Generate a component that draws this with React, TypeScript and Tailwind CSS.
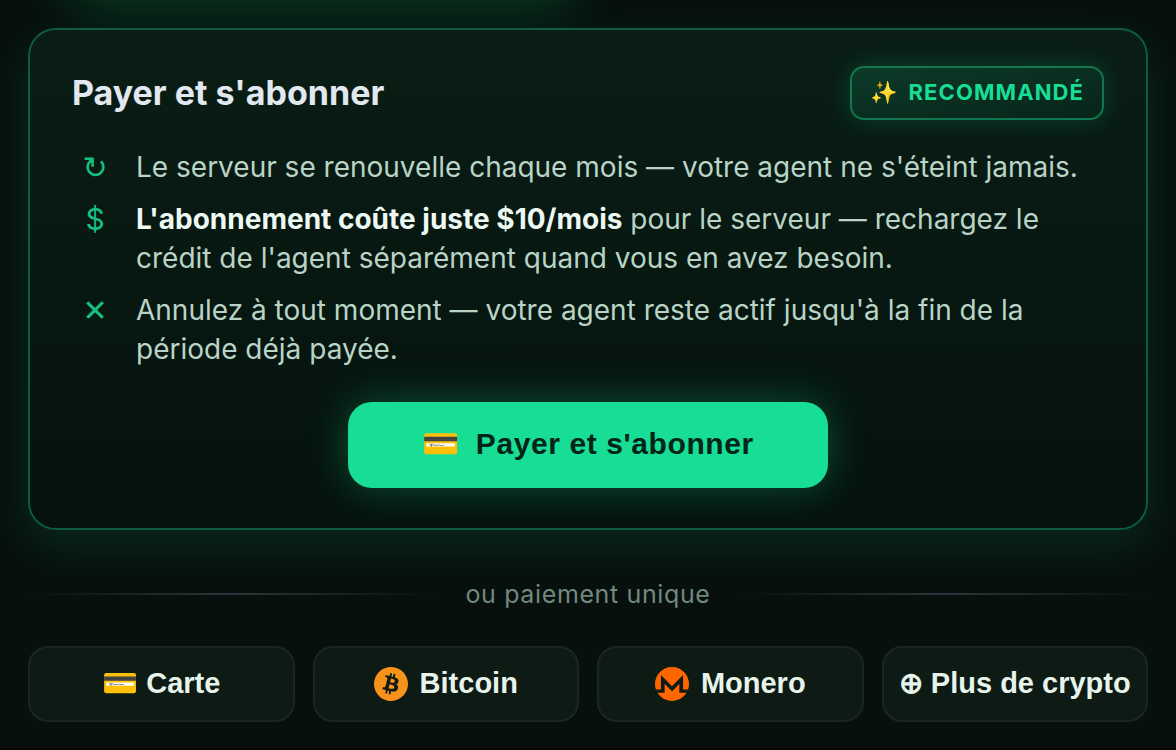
import React from 'react';
import { SiBitcoin, SiMonero } from 'react-icons/si';

const perks = [
  {
    icon: '↻',
    iconFont: "font-['DejaVu_Sans',sans-serif]",
    text: <>Le serveur se renouvelle chaque mois — votre agent ne s'éteint jamais.</>,
  },
  {
    icon: '$',
    iconFont: 'font-[Inter,sans-serif]',
    text: (
      <>
        <strong className="font-bold text-[#ecf8f1]">L'abonnement coûte juste $10/mois</strong> pour le serveur —
        rechargez le crédit de l'agent séparément quand vous en avez besoin.
      </>
    ),
  },
  {
    icon: '✕',
    iconFont: "font-['DejaVu_Sans',sans-serif]",
    text: <>Annulez à tout moment — votre agent reste actif jusqu'à la fin de la période déjà payée.</>,
  },
];

const methodClass =
  "flex h-[76px] cursor-pointer items-center justify-center whitespace-nowrap rounded-[20px] border-2 border-[#1a2620] bg-[#0e1a14] font-['Liberation_Sans',sans-serif] text-[29px] font-bold text-[#e6f4ec]";

const App = () => {
  return (
    <div className="relative min-h-screen overflow-hidden border-b-2 border-[#020504] bg-[#07100d] px-7 pt-7 pb-6 font-[Inter,sans-serif]">
      {/* glow of the plan selected above */}
      <div
        aria-hidden="true"
        className="absolute -top-20 left-[68px] h-16 w-[508px] rounded-[28px] shadow-[0_16px_56px_rgba(24,222,130,0.28)]"
      />

      <section className="relative rounded-[28px] border-2 border-[#0e5c40] bg-linear-to-b from-[#0a1f16]/90 to-[#05120d] px-[42px] pt-9 pb-10 shadow-[0_16px_48px_rgba(24,222,148,0.12)]">
        <div className="flex h-[54px] items-center justify-between">
          <h2 className="pb-0.5 text-[34px] font-bold text-slate-200">Payer et s'abonner</h2>
          <span className="flex h-[54px] items-center gap-[10px] rounded-[14px] border-2 border-[#11774f] bg-linear-to-br from-[#0c3a29] to-[#08241a] px-[18px] pb-0.5 text-[22px] font-bold tracking-wider text-[#18dd94] shadow-[0_0_24px_rgba(24,222,148,0.2)]">
            <span>✨</span>
            <span>RECOMMANDÉ</span>
          </span>
        </div>

        <ul className="mt-7 flex flex-col gap-[13px]">
          {perks.map((perk) => (
            <li key={perk.icon} className="flex items-start gap-[18px] text-[28px] leading-[39px] text-[#b9d4c6]">
              <span className={`w-[46px] shrink-0 text-center text-[30px] text-[#17bf80] ${perk.iconFont}`}>
                {perk.icon}
              </span>
              <span>{perk.text}</span>
            </li>
          ))}
        </ul>

        <button
          type="button"
          className="mx-auto mt-[33px] flex h-[86px] w-[480px] cursor-pointer items-center justify-center gap-4 rounded-[24px] bg-[#18dd94] pb-1 font-['Liberation_Sans',sans-serif] text-[30px] font-bold tracking-[0.02em] text-[#04241a] shadow-[0_0_40px_rgba(24,222,148,0.3)]"
        >
          <span>💳</span>
          <span>Payer et s'abonner</span>
        </button>
      </section>

      <div className="relative mt-[46px] flex items-center gap-[30px] text-[25px] leading-9 tracking-wide text-[#72897f]">
        <span className="h-0.5 flex-1 bg-linear-to-r from-transparent via-[#2c353b] to-transparent" />
        <span>ou paiement unique</span>
        <span className="h-0.5 flex-1 bg-linear-to-r from-transparent via-[#2c353b] to-transparent" />
      </div>

      <div className="relative mt-[34px] grid grid-cols-4 gap-[18px]">
        <button type="button" className={methodClass}>
          💳 Carte
        </button>
        <button type="button" className={`${methodClass} gap-3`}>
          <SiBitcoin className="size-[34px] text-[#f7931a]" />
          <span>Bitcoin</span>
        </button>
        <button type="button" className={`${methodClass} gap-3`}>
          <SiMonero className="size-[34px] text-[#ff6600]" />
          <span>Monero</span>
        </button>
        <button type="button" className={methodClass}>
          ⊕ Plus de crypto
        </button>
      </div>
    </div>
  );
};

export default App;
